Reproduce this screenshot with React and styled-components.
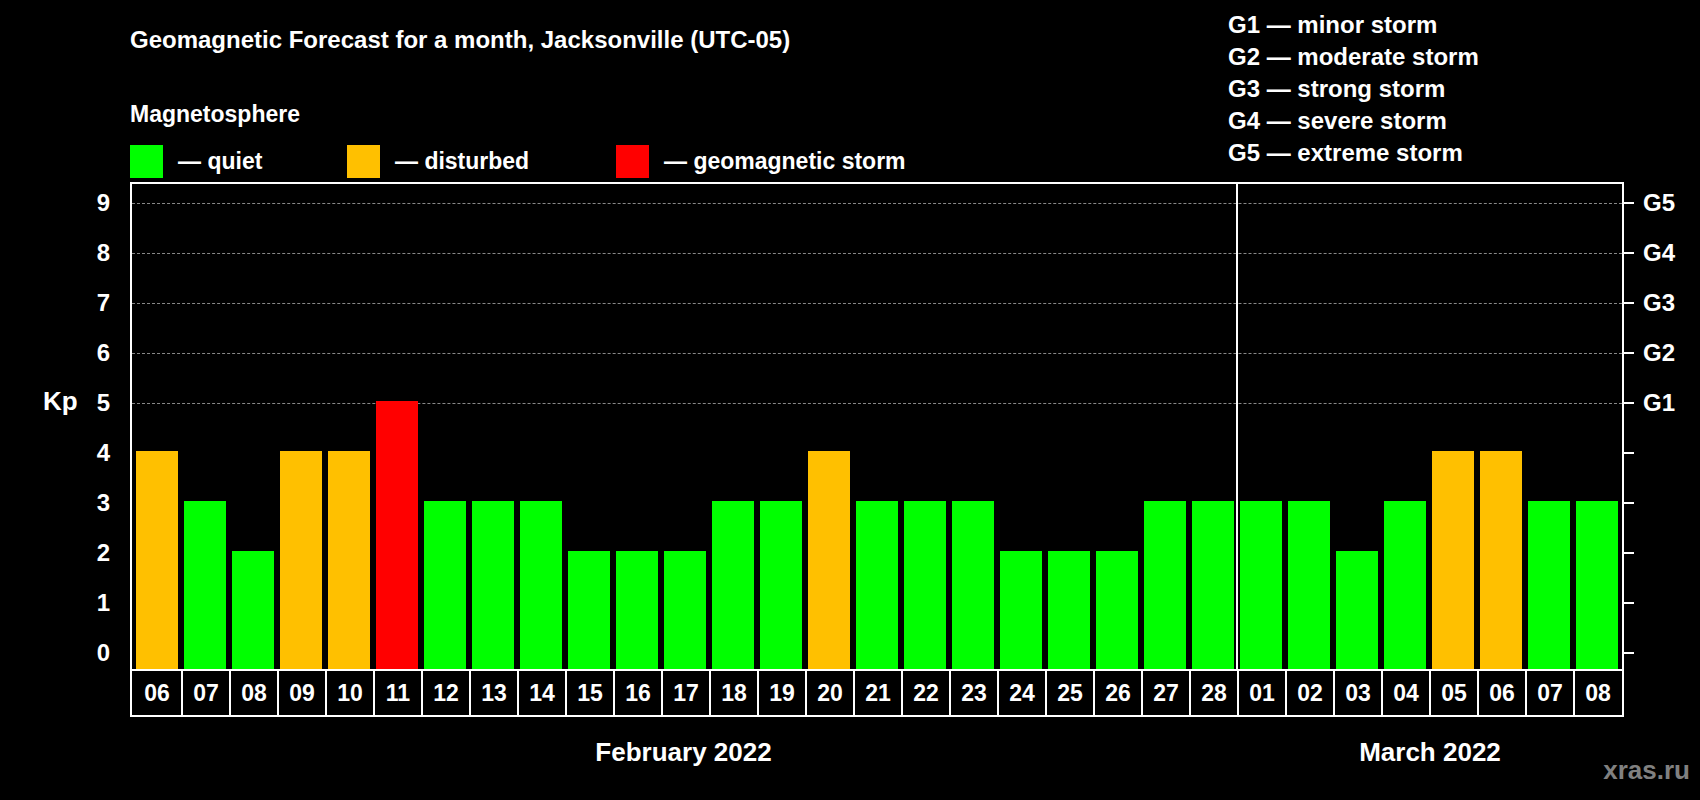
import React from "react";
import styled, { createGlobalStyle } from "styled-components";

const GlobalStyle = createGlobalStyle`
  body { margin: 0; background: #000; }
`;

const GREEN = "#00ff00";
const ORANGE = "#ffc000";
const RED = "#ff0000";
const UNIT = 50;
const BASE = 18;

const days = [
  ["06", 4], ["07", 3], ["08", 2], ["09", 4], ["10", 4], ["11", 5], ["12", 3],
  ["13", 3], ["14", 3], ["15", 2], ["16", 2], ["17", 2], ["18", 3], ["19", 3],
  ["20", 4], ["21", 3], ["22", 3], ["23", 3], ["24", 2], ["25", 2], ["26", 2],
  ["27", 3], ["28", 3], ["01", 3], ["02", 3], ["03", 2], ["04", 3], ["05", 4],
  ["06", 4], ["07", 3], ["08", 3],
];

const colorFor = (kp) => (kp >= 5 ? RED : kp === 4 ? ORANGE : GREEN);

const Page = styled.div`
  width: 1700px;
  height: 800px;
  background: #000;
  color: #fff;
  font-family: "Liberation Sans", Arial, sans-serif;
  font-weight: bold;
  position: relative;
  overflow: hidden;
`;

const Header = styled.div`
  display: flex;
  height: 182px;
`;

const LeftHead = styled.div`
  padding-left: 130px;
  width: 1098px;
`;

const Title = styled.div`
  font-size: 24px;
  margin-top: 26px;
`;

const Sub = styled.div`
  font-size: 23px;
  margin-top: 47px;
`;

const Legend = styled.div`
  display: flex;
  margin-top: 17px;
  align-items: center;
`;

const LegendItem = styled.div`
  display: flex;
  align-items: center;
  width: ${(p) => p.$w}px;
  font-size: 23px;
  gap: 15px;
`;

const Swatch = styled.div`
  width: 33px;
  height: 33px;
  background: ${(p) => p.$c};
`;

const GLegend = styled.div`
  display: flex;
  flex-direction: column;
  margin-top: 13px;
  gap: 8px;
  font-size: 24px;
  line-height: 24px;
`;

const ChartRow = styled.div`
  display: flex;
`;

const YAxis = styled.div`
  width: 130px;
  height: 487px;
  position: relative;
`;

const YLabel = styled.div`
  position: absolute;
  right: 20px;
  font-size: 24px;
  transform: translateY(-50%);
`;

const KpLabel = styled.div`
  position: absolute;
  left: 43px;
  top: 219px;
  transform: translateY(-50%);
  font-size: 26px;
`;

const Plot = styled.div`
  width: 1489px;
  height: 485px;
  border: 2px solid #fff;
  border-bottom: none;
  position: relative;
  display: flex;
  align-items: flex-end;
  padding-left: 1px;
`;

const GridLine = styled.div`
  position: absolute;
  left: 0;
  right: 0;
  border-top: 1px dashed #888;
`;

const Col = styled.div`
  width: 48px;
  display: flex;
  justify-content: center;
  align-items: flex-end;
  height: 100%;
  position: relative;
  z-index: 1;
`;

const Bar = styled.div`
  width: 42px;
  background: ${(p) => p.$c};
`;

const Separator = styled.div`
  position: absolute;
  top: 0;
  bottom: 0;
  left: ${(p) => p.$x}px;
  border-left: 2px solid #fff;
  z-index: 2;
`;

const RightAxis = styled.div`
  height: 487px;
  position: relative;
  flex: 1;
`;

const Tick = styled.div`
  position: absolute;
  left: 0;
  width: 10px;
  border-top: 2px solid #fff;
`;

const GLabel = styled.div`
  position: absolute;
  left: 19px;
  font-size: 24px;
  transform: translateY(-50%);
`;

const DateRow = styled.div`
  display: flex;
  margin-left: 130px;
  border: 2px solid #fff;
  width: 1489px;
  padding-left: 1px;
  height: 44px;
`;

const DateCell = styled.div`
  width: 48px;
  display: flex;
  align-items: center;
  justify-content: center;
  font-size: 23px;
  border-left: ${(p) => (p.$first ? "none" : "2px solid #fff")};
  box-sizing: border-box;
`;

const Months = styled.div`
  display: flex;
  margin-left: 130px;
  width: 1493px;
  margin-top: 20px;
  font-size: 26px;
`;

const Month = styled.div`
  width: ${(p) => p.$w}px;
  text-align: center;
`;

const Watermark = styled.div`
  position: absolute;
  right: 10px;
  bottom: 14px;
  font-size: 26px;
  color: #808080;
`;

const yOf = (k) => 469 - k * UNIT; // inside plot, top-based

export default function App() {
  return (
    <Page>
      <GlobalStyle />
      <Header>
        <LeftHead>
          <Title>Geomagnetic Forecast for a month, Jacksonville (UTC-05)</Title>
          <Sub>Magnetosphere</Sub>
          <Legend>
            <LegendItem $w={217}><Swatch $c={GREEN} />— quiet</LegendItem>
            <LegendItem $w={269}><Swatch $c={ORANGE} />— disturbed</LegendItem>
            <LegendItem $w={320}><Swatch $c={RED} />— geomagnetic storm</LegendItem>
          </Legend>
        </LeftHead>
        <GLegend>
          <div>G1 — minor storm</div>
          <div>G2 — moderate storm</div>
          <div>G3 — strong storm</div>
          <div>G4 — severe storm</div>
          <div>G5 — extreme storm</div>
        </GLegend>
      </Header>
      <ChartRow>
        <YAxis>
          <KpLabel>Kp</KpLabel>
          {Array.from({ length: 10 }, (_, k) => (
            <YLabel key={k} style={{ top: yOf(k) + 2 }}>{k}</YLabel>
          ))}
        </YAxis>
        <Plot>
          {[5, 6, 7, 8, 9].map((k) => (
            <GridLine key={k} style={{ top: yOf(k) }} />
          ))}
          {days.map(([d, kp], i) => (
            <Col key={i}>
              <Bar $c={colorFor(kp)} style={{ height: BASE + kp * UNIT }} />
            </Col>
          ))}
          <Separator $x={1104} />
        </Plot>
        <RightAxis>
          {Array.from({ length: 10 }, (_, k) => (
            <Tick key={k} style={{ top: yOf(k) + 1 }} />
          ))}
          {["G1", "G2", "G3", "G4", "G5"].map((g, i) => (
            <GLabel key={g} style={{ top: yOf(i + 5) + 2 }}>{g}</GLabel>
          ))}
        </RightAxis>
      </ChartRow>
      <DateRow>
        {days.map(([d], i) => (
          <DateCell key={i} $first={i === 0}>{d}</DateCell>
        ))}
      </DateRow>
      <Months>
        <Month $w={1107}>February 2022</Month>
        <Month $w={386}>March 2022</Month>
      </Months>
      <Watermark>xras.ru</Watermark>
    </Page>
  );
}
